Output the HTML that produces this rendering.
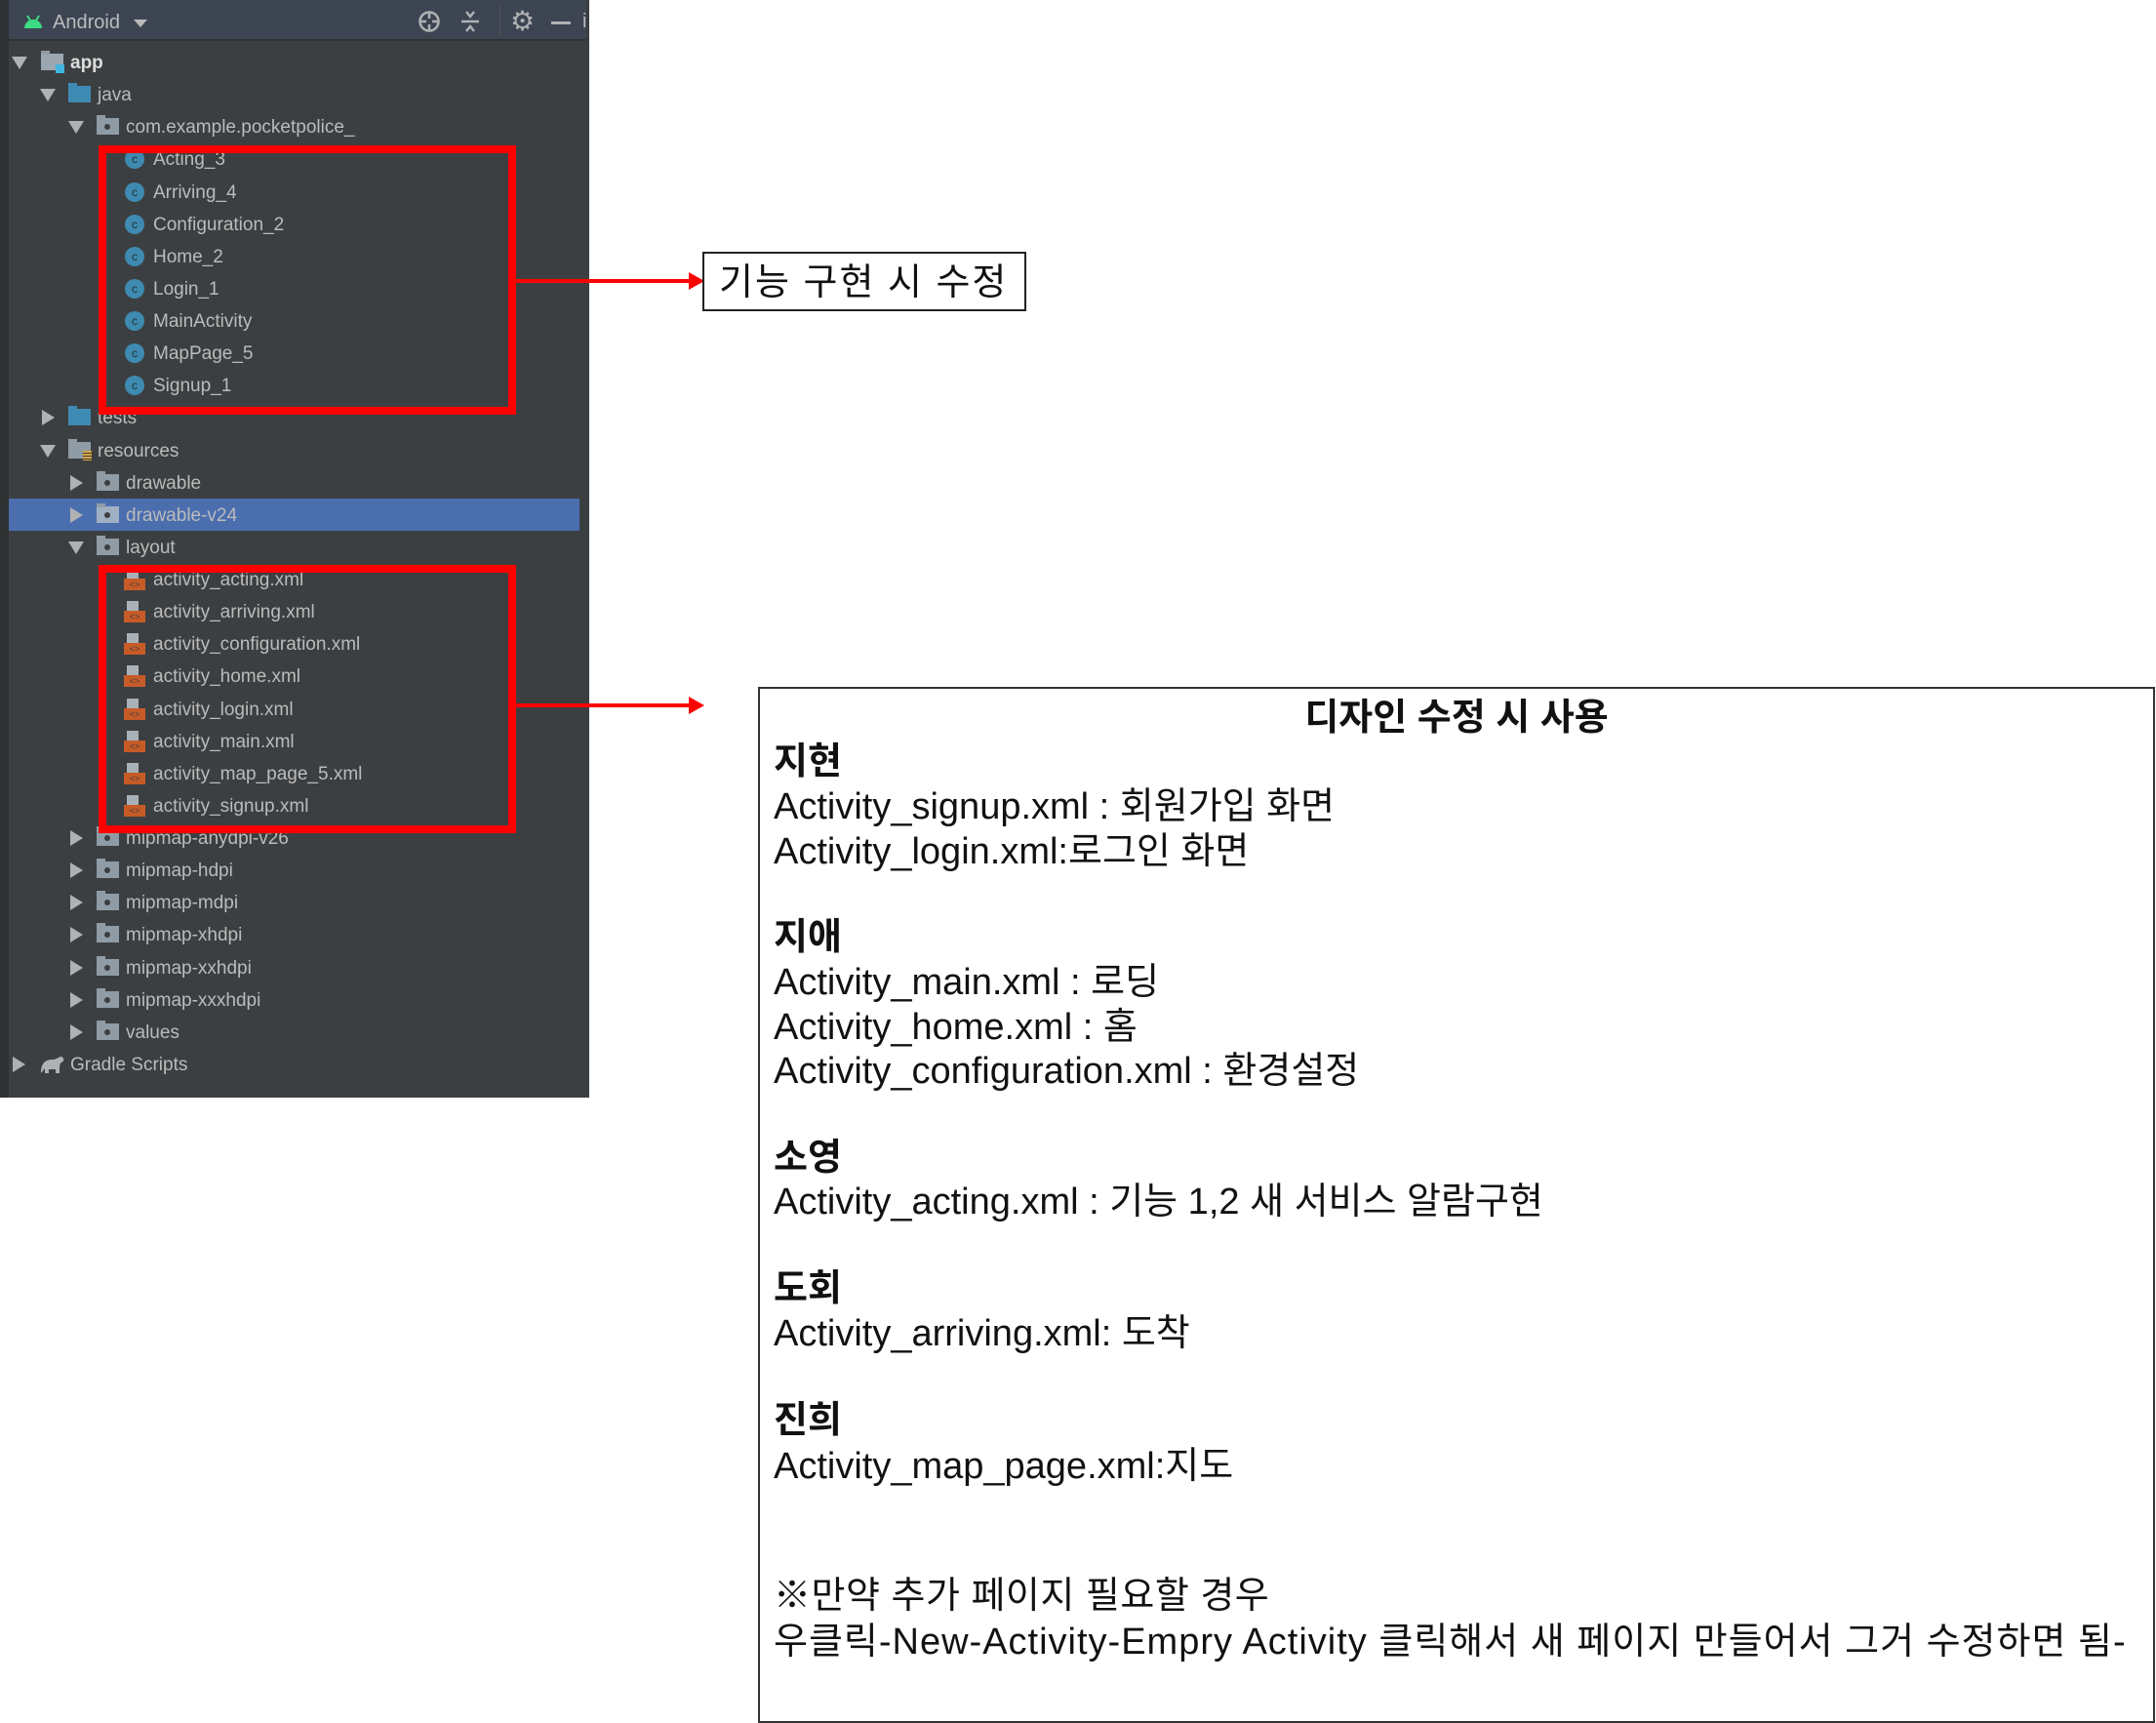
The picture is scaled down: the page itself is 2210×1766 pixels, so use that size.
<!DOCTYPE html>
<html><head><meta charset="utf-8"><style>
*{margin:0;padding:0;box-sizing:border-box}
body{width:2210px;height:1766px;background:#fff;position:relative;overflow:hidden;font-family:"Liberation Sans","Noto Sans CJK KR",sans-serif}
#panel{position:absolute;left:0;top:0;width:604px;height:1125px;background:#3c3f41}
#strip{position:absolute;left:0;top:0;width:9px;height:1125px;background:#2f3133}
#head{position:absolute;left:9px;top:0;width:592px;height:42px;background:#3d4552;border-bottom:2px solid #323232}
.r{position:absolute;height:33px;line-height:35px;font-size:19px;color:#bbbbbb;white-space:nowrap}
.tri{position:absolute;width:0;height:0}
.td{border-left:8px solid transparent;border-right:8px solid transparent;border-top:13px solid #afb1b3;top:11px}
.tr{border-top:8px solid transparent;border-bottom:8px solid transparent;border-left:13px solid #afb1b3;top:9px}
.fold{position:absolute;top:8px;width:23px;height:17px;background:#8f9ca6}
.fold:before{content:"";position:absolute;left:0;top:-3px;width:9px;height:4px;background:#8f9ca6}
.fold.b{background:#3f8ab3}.fold.b:before{background:#3f8ab3}
.fold.d:after{content:"";position:absolute;left:8px;top:6px;width:6px;height:6px;border-radius:50%;background:#3c3f41}
.cls{position:absolute;top:7px;width:20px;height:20px;border-radius:50%;background:#3e8ab0;color:#233;font-size:12px;line-height:20px;text-align:center}
.xml{position:absolute;top:6px;width:22px;height:22px}
.xml:before{content:"";position:absolute;left:3px;top:0;width:12px;height:11px;background:#a9b1b8}
.xml:after{content:"<>";position:absolute;left:0;top:10px;width:22px;height:12px;background:#c75b28;color:#3c3f41;font-size:9px;line-height:12px;text-align:center}
.t{position:absolute;top:0}
.hl{position:absolute;left:9px;top:511px;width:585px;height:33px;background:#4b6eaf}
.red{position:absolute;border:8px solid #ff0000}
.ln{position:absolute;height:4px;background:#ff0000}
.ah{position:absolute;width:0;height:0;border-top:9px solid transparent;border-bottom:9px solid transparent;border-left:16px solid #ff0000}
.bt{position:absolute;font-size:38px;color:#111;white-space:nowrap;line-height:44px}
.b{font-weight:bold}
</style></head><body>
<div id="panel"></div><div id="strip"></div>
<div id="head">
<svg style="position:absolute;left:14px;top:14px" width="22" height="16" viewBox="0 0 22 16"><path d="M2 15 A9 9 0 0 1 20 15 Z" fill="#3ddc84"/><path d="M5 2 L8 7 M17 2 L14 7" stroke="#3ddc84" stroke-width="2"/></svg>
<div style="position:absolute;left:45px;top:12px;font-size:20px;color:#bbb">Android</div>
<div style="position:absolute;left:128px;top:20px;border-left:7px solid transparent;border-right:7px solid transparent;border-top:8px solid #bbb"></div>
<svg style="position:absolute;left:419px;top:10px" width="24" height="24" viewBox="0 0 24 24"><circle cx="12" cy="12" r="9.5" fill="none" stroke="#afb1b3" stroke-width="2.5"/><path d="M12 2v7M12 15v7M2 12h7M15 12h7" stroke="#afb1b3" stroke-width="2.5"/></svg>
<svg style="position:absolute;left:462px;top:9px" width="22" height="26" viewBox="0 0 22 26"><path d="M2 13h18M7 3l4 5 4-5M7 23l4-5 4 5" stroke="#afb1b3" stroke-width="2.5" fill="none"/></svg>
<div style="position:absolute;left:503px;top:6px;width:1px;height:30px;background:#555"></div>
<div style="position:absolute;left:514px;top:5px;font-size:28px;color:#afb1b3">⚙</div>
<div style="position:absolute;left:556px;top:22px;width:20px;height:3px;background:#afb1b3"></div>
<div style="position:absolute;left:588px;top:11px;font-size:20px;color:#bbb">i</div>
</div>
<div class="hl"></div>

<div class="r" style="top:47px;left:0;width:600px"><div class="tri td" style="left:12px"></div><div class="fold" style="left:42px;background:#9aa7b0"></div><div style="position:absolute;left:57px;top:19px;width:9px;height:9px;background:#40b6e0"></div><div class="t b" style="left:72px;color:#ddd">app</div></div>
<div class="r" style="top:80px;left:0"><div class="tri td" style="left:41px"></div><div class="fold b" style="left:70px"></div><div class="t" style="left:100px">java</div></div>
<div class="r" style="top:113px;left:0"><div class="tri td" style="left:70px"></div><div class="fold d" style="left:99px"></div><div class="t" style="left:129px">com.example.pocketpolice_</div></div>
<div class="r" style="top:146px;left:0"><div class="cls" style="left:128px">c</div><div class="t" style="left:157px">Acting_3</div></div>
<div class="r" style="top:180px;left:0"><div class="cls" style="left:128px">c</div><div class="t" style="left:157px">Arriving_4</div></div>
<div class="r" style="top:213px;left:0"><div class="cls" style="left:128px">c</div><div class="t" style="left:157px">Configuration_2</div></div>
<div class="r" style="top:246px;left:0"><div class="cls" style="left:128px">c</div><div class="t" style="left:157px">Home_2</div></div>
<div class="r" style="top:279px;left:0"><div class="cls" style="left:128px">c</div><div class="t" style="left:157px">Login_1</div></div>
<div class="r" style="top:312px;left:0"><div class="cls" style="left:128px">c</div><div class="t" style="left:157px">MainActivity</div></div>
<div class="r" style="top:345px;left:0"><div class="cls" style="left:128px">c</div><div class="t" style="left:157px">MapPage_5</div></div>
<div class="r" style="top:378px;left:0"><div class="cls" style="left:128px">c</div><div class="t" style="left:157px">Signup_1</div></div>
<div class="r" style="top:411px;left:0"><div class="tri tr" style="left:43px"></div><div class="fold b" style="left:70px"></div><div class="t" style="left:100px">tests</div></div>
<div class="r" style="top:445px;left:0"><div class="tri td" style="left:41px"></div><div class="fold" style="left:70px"></div><div style="position:absolute;left:85px;top:17px;width:9px;height:10px;background:repeating-linear-gradient(#d9a343 0 2px,#3c3f41 2px 3px)"></div><div class="t" style="left:100px">resources</div></div>
<div class="r" style="top:478px;left:0"><div class="tri tr" style="left:72px"></div><div class="fold d" style="left:99px"></div><div class="t" style="left:129px">drawable</div></div>
<div class="r" style="top:511px;left:0"><div class="tri tr" style="left:72px"></div><div class="fold d" style="left:99px;background:#9fb0c2"></div><div class="t" style="left:129px">drawable-v24</div></div>
<div class="r" style="top:544px;left:0"><div class="tri td" style="left:70px"></div><div class="fold d" style="left:99px"></div><div class="t" style="left:129px">layout</div></div>
<div class="r" style="top:577px;left:0"><div class="xml" style="left:127px"></div><div class="t" style="left:157px">activity_acting.xml</div></div>
<div class="r" style="top:610px;left:0"><div class="xml" style="left:127px"></div><div class="t" style="left:157px">activity_arriving.xml</div></div>
<div class="r" style="top:643px;left:0"><div class="xml" style="left:127px"></div><div class="t" style="left:157px">activity_configuration.xml</div></div>
<div class="r" style="top:676px;left:0"><div class="xml" style="left:127px"></div><div class="t" style="left:157px">activity_home.xml</div></div>
<div class="r" style="top:710px;left:0"><div class="xml" style="left:127px"></div><div class="t" style="left:157px">activity_login.xml</div></div>
<div class="r" style="top:743px;left:0"><div class="xml" style="left:127px"></div><div class="t" style="left:157px">activity_main.xml</div></div>
<div class="r" style="top:776px;left:0"><div class="xml" style="left:127px"></div><div class="t" style="left:157px">activity_map_page_5.xml</div></div>
<div class="r" style="top:809px;left:0"><div class="xml" style="left:127px"></div><div class="t" style="left:157px">activity_signup.xml</div></div>
<div class="r" style="top:842px;left:0"><div class="tri tr" style="left:72px"></div><div class="fold d" style="left:99px"></div><div class="t" style="left:129px">mipmap-anydpi-v26</div></div>
<div class="r" style="top:875px;left:0"><div class="tri tr" style="left:72px"></div><div class="fold d" style="left:99px"></div><div class="t" style="left:129px">mipmap-hdpi</div></div>
<div class="r" style="top:908px;left:0"><div class="tri tr" style="left:72px"></div><div class="fold d" style="left:99px"></div><div class="t" style="left:129px">mipmap-mdpi</div></div>
<div class="r" style="top:941px;left:0"><div class="tri tr" style="left:72px"></div><div class="fold d" style="left:99px"></div><div class="t" style="left:129px">mipmap-xhdpi</div></div>
<div class="r" style="top:975px;left:0"><div class="tri tr" style="left:72px"></div><div class="fold d" style="left:99px"></div><div class="t" style="left:129px">mipmap-xxhdpi</div></div>
<div class="r" style="top:1008px;left:0"><div class="tri tr" style="left:72px"></div><div class="fold d" style="left:99px"></div><div class="t" style="left:129px">mipmap-xxxhdpi</div></div>
<div class="r" style="top:1041px;left:0"><div class="tri tr" style="left:72px"></div><div class="fold d" style="left:99px"></div><div class="t" style="left:129px">values</div></div>
<div class="r" style="top:1074px;left:0"><div class="tri tr" style="left:13px"></div><svg style="position:absolute;left:41px;top:7px" width="25" height="20" viewBox="0 0 25 20"><path d="M1 19 C1 8 6 5 13 5 C17 5 19 2 22 2 C25 3 25 7 22 8 C20 9 20 12 20 19 H16 V15 H9 V19 H5 V14 Z" fill="#afb1b3"/></svg><div class="t" style="left:72px">Gradle Scripts</div></div>

<div class="red" style="left:101px;top:149px;width:428px;height:276px"></div>
<div class="red" style="left:101px;top:579px;width:428px;height:275px"></div>
<div class="ln" style="left:525px;top:286px;width:183px"></div>
<div class="ah" style="left:706px;top:279px"></div>
<div class="ln" style="left:525px;top:721px;width:183px"></div>
<div class="ah" style="left:706px;top:714px"></div>

<div style="position:absolute;left:720px;top:258px;width:332px;height:61px;border:2px solid #222"></div>
<div class="bt" style="left:737px;top:268px;letter-spacing:2px">기능 구현 시 수정</div>

<div style="position:absolute;left:777px;top:704px;width:1432px;height:1062px;border:2px solid #333"></div>
<div class="bt b" style="left:777px;width:1432px;text-align:center;top:714px">디자인 수정 시 사용</div>
<div class="bt b" style="left:793px;top:759px">지현</div>
<div class="bt" style="left:793px;top:805px">Activity_signup.xml : 회원가입 화면</div>
<div class="bt" style="left:793px;top:851px">Activity_login.xml:로그인 화면</div>
<div class="bt b" style="left:793px;top:939px">지애</div>
<div class="bt" style="left:793px;top:985px">Activity_main.xml : 로딩</div>
<div class="bt" style="left:793px;top:1031px">Activity_home.xml : 홈</div>
<div class="bt" style="left:793px;top:1076px">Activity_configuration.xml : 환경설정</div>
<div class="bt b" style="left:793px;top:1165px">소영</div>
<div class="bt" style="left:793px;top:1210px">Activity_acting.xml : 기능 1,2 새 서비스 알람구현</div>
<div class="bt b" style="left:793px;top:1299px">도회</div>
<div class="bt" style="left:793px;top:1345px">Activity_arriving.xml: 도착</div>
<div class="bt b" style="left:793px;top:1434px">진희</div>
<div class="bt" style="left:793px;top:1481px">Activity_map_page.xml:지도</div>
<div class="bt" style="left:793px;top:1614px;letter-spacing:0.5px">※만약 추가 페이지 필요할 경우</div>
<div class="bt" style="left:793px;top:1661px;letter-spacing:1px">우클릭-New-Activity-Empry Activity 클릭해서 새 페이지 만들어서 그거 수정하면 됨-</div>
</body></html>
